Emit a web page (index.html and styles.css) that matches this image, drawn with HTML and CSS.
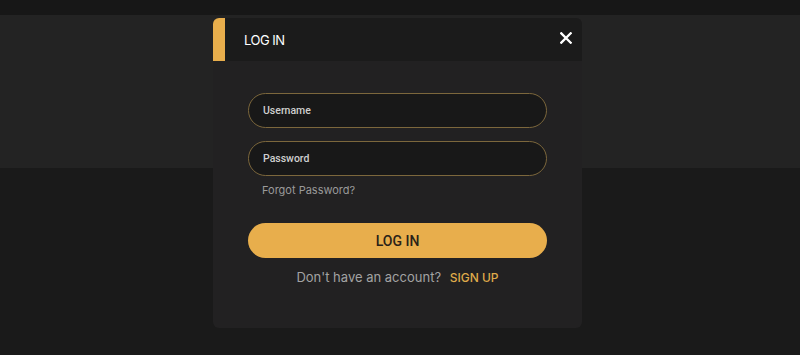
FILE: index.html
```html
<!DOCTYPE html>
<html lang="en">
<head>
<meta charset="utf-8">
<title>Log in</title>
<link rel="stylesheet" href="styles.css">
</head>
<body>
<div class="page">
  <div class="topbar"></div>
  <div class="band"></div>
</div>
<div class="modal">
  <div class="modal-head">
    <span class="accent"></span>
    <h2 class="title">LOG IN</h2>
    <button class="close" aria-label="Close">
      <svg width="12" height="12" viewBox="0 0 12 12"><path d="M1.3 1.3 L10.7 10.7 M10.7 1.3 L1.3 10.7" stroke="#fff" stroke-width="2.3" stroke-linecap="square"/></svg>
    </button>
  </div>
  <form class="modal-body">
    <input class="field" type="text" placeholder="Username">
    <input class="field field-pass" type="password" placeholder="Password">
    <a class="forgot" href="#">Forgot Password?</a>
    <button class="submit" type="button">LOG IN</button>
    <p class="signup">Don't have an account? <a href="#">SIGN UP</a></p>
  </form>
</div>
</body>
</html>
```

FILE: styles.css
```css
* { box-sizing: border-box; }
html, body { margin: 0; padding: 0; }
body {
  background: #1a1a1a;
  width: 800px;
  height: 355px;
  overflow: hidden;
  font-family: "Inter", "Liberation Sans", sans-serif;
}
.page { display: flex; flex-direction: column; }
.topbar { height: 15px; background: #171717; }
.band { height: 153px; background: #232323; }

.modal {
  position: absolute;
  left: 213px;
  top: 18px;
  width: 369px;
  height: 310px;
  background: #222122;
  border-radius: 6px;
  overflow: hidden;
}
.modal-head {
  display: flex;
  align-items: center;
  height: 43px;
  background: #1b1b1b;
}
.accent {
  width: 12px;
  align-self: stretch;
  background: #e8ae4c;
}
.title {
  margin: 0 0 0 19px;
  flex: 1;
  font-family: "Inter", "Liberation Sans", sans-serif;
  font-weight: 400;
  font-size: 13px;
  letter-spacing: -0.5px;
  color: #ffffff;
}
.close {
  background: none;
  border: 0;
  padding: 0;
  margin: 0 10px 3px 0;
  width: 12px;
  height: 12px;
  display: flex;
  align-items: center;
  justify-content: center;
  cursor: pointer;
}
.modal-body {
  display: flex;
  flex-direction: column;
  padding: 32px 35px 0;
}
.field {
  height: 35px;
  border: 1px solid #7c673c;
  border-radius: 18px;
  background: #181818;
  padding: 0 14px;
  font-family: "Roboto", sans-serif;
  font-weight: 500;
  font-size: 10.5px;
  color: #d4d4d4;
  outline: none;
}
.field::placeholder { color: #cfcfcf; }
.field-pass { margin-top: 13px; }
.forgot {
  margin: 7px 0 0 14px;
  font-size: 11px;
  line-height: 15px;
  color: #9a9a9a;
  text-decoration: none;
}
.submit {
  margin-top: 25px;
  height: 35px;
  border: 0;
  border-radius: 18px;
  background: #e8ae4c;
  color: #2a2218;
  font-family: "Roboto", sans-serif;
  font-weight: 500;
  font-size: 14px;
  cursor: pointer;
}
.signup {
  margin: 10px 0 0;
  text-align: center;
  font-size: 13px;
  line-height: 18px;
  color: #a3a3a3;
}
.signup a {
  margin-left: 5px;
  color: #dfaa4a;
  font-weight: 500;
  font-size: 12px;
  text-decoration: none;
}
```
